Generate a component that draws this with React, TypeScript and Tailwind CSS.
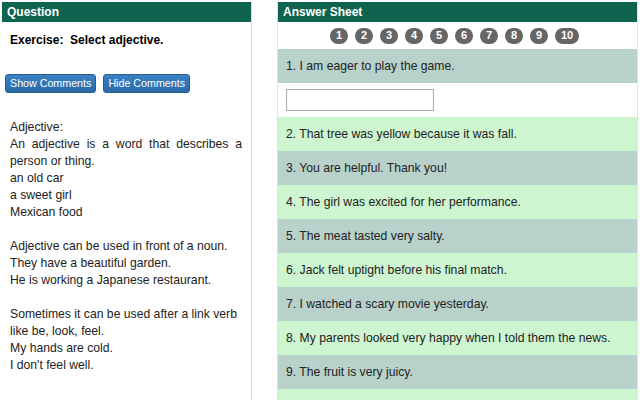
// Adjective exercise: question panel on the left, answer sheet on the right.
const sentences = [
  "1. I am eager to play the game.",
  "2. That tree was yellow because it was fall.",
  "3. You are helpful. Thank you!",
  "4. The girl was excited for her performance.",
  "5. The meat tasted very salty.",
  "6. Jack felt uptight before his final match.",
  "7. I watched a scary movie yesterday.",
  "8. My parents looked very happy when I told them the news.",
  "9. The fruit is very juicy.",
  "10. She wore a lovely dress.",
];

const btnCls =
  "h-[19px] rounded-[3px] border border-[#285e8e] bg-gradient-to-b from-[#3a82c4] to-[#2a6aa8] px-[4px] text-[10.7px] leading-[17px] text-white";

export default function App() {
  return (
    <div
      className="flex h-[400px] w-[640px] overflow-hidden bg-white pt-[2px] pl-[2px] text-[#222]"
      style={{ fontFamily: '"Liberation Sans", Arial, sans-serif' }}
    >
      <div className="h-[420px] w-[250px] border-r border-[#d8d8d8]">
        <div className="h-[20px] bg-[#0f6450] pl-[5px] text-[12px] font-bold leading-[20px] text-white">
          Question
        </div>
        <div className="pl-[8px] pr-[9px]">
          <div className="mt-[11px] text-[12px] font-bold leading-[14px] text-black">
            Exercise:&nbsp; Select adjective.
          </div>
          <div className="mt-[27px] -ml-[5px] flex gap-[7px]">
            <button className={btnCls}>Show Comments</button>
            <button className={btnCls}>Hide Comments</button>
          </div>
          <div className="mt-[26px] text-justify text-[12.2px] leading-[17px]">
            <p>Adjective:</p>
            <p>An adjective is a word that describes a person or thing.</p>
            <p>an old car</p>
            <p>a sweet girl</p>
            <p>Mexican food</p>
            <p>&nbsp;</p>
            <p>Adjective can be used in front of a noun.</p>
            <p>They have a beautiful garden.</p>
            <p>He is working a Japanese restaurant.</p>
            <p>&nbsp;</p>
            <p className="text-left">Sometimes it can be used after a link verb like be, look, feel.</p>
            <p>My hands are cold.</p>
            <p>I don't feel well.</p>
          </div>
        </div>
      </div>

      <div className="ml-[25px] w-[361px] border-x border-[#e2e2e2]">
        <div className="h-[20px] bg-[#0f6450] pl-[5px] text-[12px] font-bold leading-[20px] text-white">
          Answer Sheet
        </div>
        <div className="flex h-[27px] items-center justify-center gap-[7px] pr-[6px]">
          {Array.from({ length: 10 }, (_, i) => (
            <span
              key={i}
              className={
                "flex h-[16px] items-center justify-center rounded-full bg-[#666] text-[11px] font-bold text-white " +
                (i === 9 ? "w-[24px]" : "w-[18px]")
              }
            >
              {i + 1}
            </span>
          ))}
        </div>
        {sentences.map((s, i) => (
          <div key={i}>
            <div
              className={
                "h-[34px] pl-[8px] text-[12.2px] leading-[34px] " +
                (i % 2 === 0 ? "bg-[#b8d1ca]" : "bg-[#cdf5d0]")
              }
            >
              {s}
            </div>
            {i === 0 && (
              <div className="flex h-[34px] items-center pl-[8px]">
                <input
                  type="text"
                  className="h-[22px] w-[148px] border border-[#aaa] bg-white"
                />
              </div>
            )}
          </div>
        ))}
      </div>
    </div>
  );
}
